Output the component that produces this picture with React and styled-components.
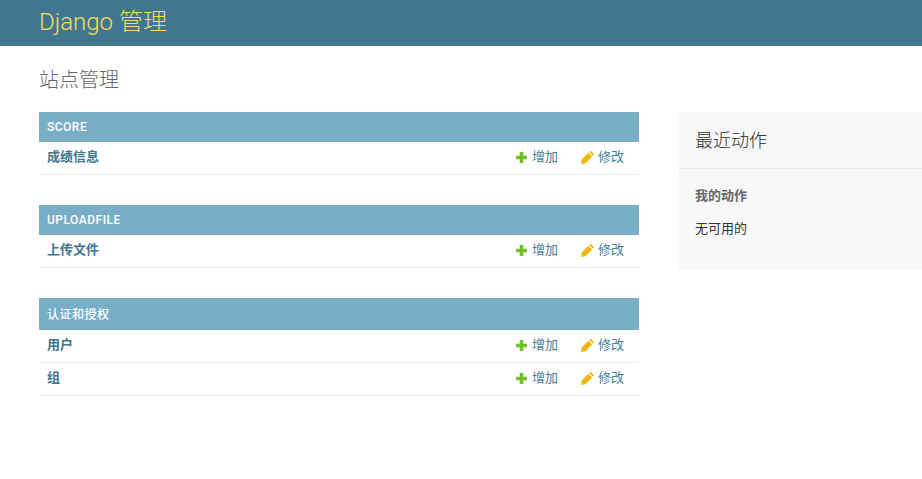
import styled, { createGlobalStyle } from 'styled-components';

const GlobalStyle = createGlobalStyle`
  html, body {
    margin: 0;
    padding: 0;
    background: #fff;
    font-family: Roboto, "Noto Sans CJK SC", sans-serif;
    font-size: 14px;
    color: #333;
  }
`;

const modules = [
  { caption: 'SCORE', tall: false, rows: ['成绩信息'] },
  { caption: 'UPLOADFILE', tall: false, rows: ['上传文件'] },
  { caption: '认证和授权', tall: true, rows: ['用户', '组'] },
];

const PlusIcon = () => (
  <svg width="11" height="11" viewBox="0 0 11 11">
    <path d="M3.7 0h3.6v3.7H11v3.6H7.3V11H3.7V7.3H0V3.7h3.7z" fill="#70bf2b" />
  </svg>
);

const PencilIcon = () => (
  <svg width="13" height="13" viewBox="0 0 12 12">
    <path d="M0 12l0.7-4.1 6.2-6.2 3.4 3.4-6.2 6.2z" fill="#efb80b" />
    <path d="M7.7 0.9l0.6-0.6c0.3-0.3 0.8-0.3 1.1 0l2.3 2.3c0.3 0.3 0.3 0.8 0 1.1l-0.6 0.6z" fill="#efb80b" />
  </svg>
);

const App = () => {
  return (
    <>
      <GlobalStyle />
      <Header>
        <Branding>Django 管理</Branding>
      </Header>
      <Content>
        <PageTitle>站点管理</PageTitle>
        <Columns>
          <Main>
            {modules.map((m) => (
              <Module key={m.caption}>
                <Caption $tall={m.tall}>{m.caption}</Caption>
                {m.rows.map((name) => (
                  <Row key={name}>
                    <RowName href="#">{name}</RowName>
                    <RowAction href="#" $gap="5px">
                      <PlusIcon />
                      增加
                    </RowAction>
                    <RowAction href="#" $gap="4px">
                      <PencilIcon />
                      修改
                    </RowAction>
                  </Row>
                ))}
              </Module>
            ))}
          </Main>
          <Sidebar>
            <SidebarTitle>最近动作</SidebarTitle>
            <SidebarBody>
              <SidebarHeading>我的动作</SidebarHeading>
              <SidebarText>无可用的</SidebarText>
            </SidebarBody>
          </Sidebar>
        </Columns>
      </Content>
    </>
  );
};

export default App;

const Header = styled.header`
  height: 46px;
  background: #417690;
  padding: 0 0 2px 39px;
  box-sizing: border-box;
  display: flex;
  align-items: center;
`;

const Branding = styled.h1`
  margin: 0;
  font-size: 24px;
  font-weight: 300;
  line-height: 44px;
  color: #f5dd5d;
`;

const Content = styled.main`
  padding: 20px 0 0 39px;
`;

const PageTitle = styled.h1`
  margin: 0 0 18px 0;
  height: 28px;
  font-size: 20px;
  font-weight: 300;
  line-height: 28px;
  color: #666;
`;

const Columns = styled.div`
  display: flex;
  align-items: flex-start;
  gap: 40px;
`;

const Main = styled.div`
  width: 600px;
  display: flex;
  flex-direction: column;
  gap: 30px;
`;

const Module = styled.section`
  display: flex;
  flex-direction: column;
`;

const Caption = styled.div`
  height: ${(p) => (p.$tall ? '32px' : '30px')};
  line-height: ${(p) => (p.$tall ? '34px' : '30px')};
  padding: 0 8px;
  background: #79aec8;
  color: #fff;
  font-size: 12px;
  font-weight: 500;
  letter-spacing: 0.5px;
`;

const Row = styled.div`
  height: 32px;
  display: flex;
  align-items: center;
  gap: 23px;
  padding: 0 15px 0 8px;
  border-bottom: 1px solid #eee;
`;

const RowName = styled.a`
  flex: 1;
  font-size: 13px;
  line-height: 28px;
  padding-bottom: 2px;
  font-weight: 700;
  color: #417690;
  text-decoration: none;
`;

const RowAction = styled.a`
  display: flex;
  align-items: center;
  gap: ${(p) => p.$gap};
  font-size: 13px;
  line-height: 28px;
  padding-bottom: 2px;
  color: #447e9b;
  text-decoration: none;
`;

const Sidebar = styled.aside`
  flex: 1;
  height: 158px;
  background: #f8f8f8;
`;

const SidebarTitle = styled.h2`
  margin: 0;
  height: 56px;
  line-height: 57px;
  padding: 0 16px;
  font-size: 18px;
  font-weight: 300;
  color: #333;
  border-bottom: 1px solid #eaeaea;
`;

const SidebarBody = styled.div`
  padding: 0 16px;
`;

const SidebarHeading = styled.h3`
  margin: 18px 0 0 0;
  font-size: 13px;
  line-height: 18px;
  font-weight: 700;
  color: #666;
`;

const SidebarText = styled.p`
  margin: 15px 0 0 0;
  font-size: 13px;
  line-height: 18px;
  color: #333;
`;
